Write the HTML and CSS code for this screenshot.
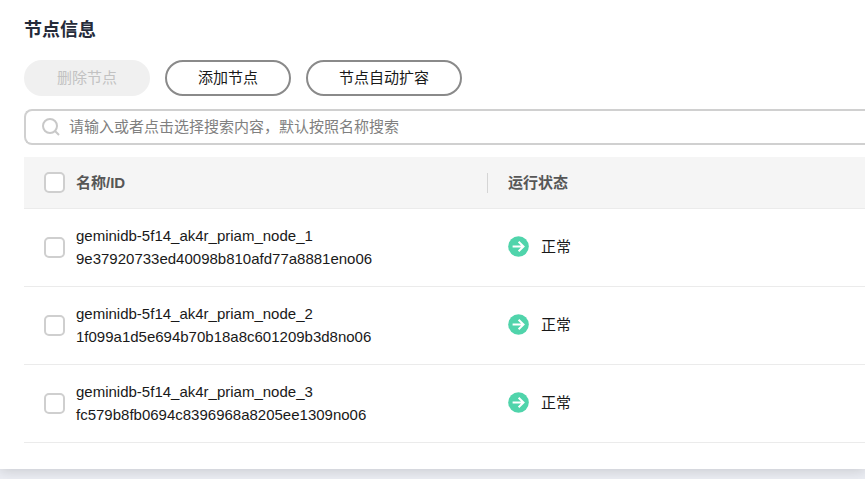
FILE: index.html
```html
<!DOCTYPE html>
<html lang="zh-CN">
<head>
    <meta charset="UTF-8">
    <meta name="viewport" content="width=device-width, initial-scale=1.0">
    <title>节点信息</title>
    <link rel="stylesheet" href="styles.css">
</head>
<body>

    <!-- status icon shared by all rows -->
    <svg class="sprite" aria-hidden="true">
        <symbol id="icon-normal" viewBox="0 0 21 21">
            <circle cx="10.5" cy="10.5" r="10.3" fill="#50d4ab"/>
            <path d="M4.6 10.5h10.8M10.6 5.8l4.9 4.7-4.9 4.7" fill="none" stroke="#fff" stroke-width="2"/>
        </symbol>
    </svg>

    <main class="card">
        <h1>节点信息</h1>

        <div class="toolbar">
            <button type="button" class="btn" disabled>删除节点</button>
            <button type="button" class="btn">添加节点</button>
            <button type="button" class="btn">节点自动扩容</button>
        </div>

        <label class="search">
            <svg class="search-icon" viewBox="0 0 18 18" aria-hidden="true">
                <circle cx="8" cy="8" r="7"/>
                <path d="M13 13l4 4"/>
            </svg>
            <input type="text" aria-label="搜索" placeholder="请输入或者点击选择搜索内容，默认按照名称搜索">
        </label>

        <table>
            <thead>
                <tr>
                    <th class="col-check"><input type="checkbox" aria-label="全选"></th>
                    <th class="col-name"><div>名称/ID</div></th>
                    <th class="col-status">运行状态</th>
                </tr>
            </thead>
            <tbody>
                <tr>
                    <td class="col-check"><input type="checkbox" aria-label="geminidb-5f14_ak4r_priam_node_1"></td>
                    <td class="col-name">geminidb-5f14_ak4r_priam_node_1<br>9e37920733ed40098b810afd77a8881eno06</td>
                    <td class="col-status"><div class="status"><svg><use href="#icon-normal"/></svg>正常</div></td>
                </tr>
                <tr>
                    <td class="col-check"><input type="checkbox" aria-label="geminidb-5f14_ak4r_priam_node_2"></td>
                    <td class="col-name">geminidb-5f14_ak4r_priam_node_2<br>1f099a1d5e694b70b18a8c601209b3d8no06</td>
                    <td class="col-status"><div class="status"><svg><use href="#icon-normal"/></svg>正常</div></td>
                </tr>
                <tr>
                    <td class="col-check"><input type="checkbox" aria-label="geminidb-5f14_ak4r_priam_node_3"></td>
                    <td class="col-name">geminidb-5f14_ak4r_priam_node_3<br>fc579b8fb0694c8396968a8205ee1309no06</td>
                    <td class="col-status"><div class="status"><svg><use href="#icon-normal"/></svg>正常</div></td>
                </tr>
            </tbody>
        </table>
    </main>

</body>
</html>
```
FILE: styles.css
```css
* {
    margin: 0;
    padding: 0;
    box-sizing: border-box;
}

body {
    min-height: 100vh;
    font-family: "Liberation Sans", "Noto Sans CJK SC", sans-serif;
    font-size: 15px;
    line-height: 23px;
    color: #191919;
    background-color: #ebedf3;
}

.sprite {
    display: none;
}

.card {
    padding: 18px 0 26px 24px;
    background-color: #fff;
    box-shadow: 0 2px 12px rgba(0, 0, 0, 0.15);
}

h1 {
    font-size: 18px;
    line-height: 24px;
    color: #252b3a;
    margin-bottom: 18px;
}

.toolbar {
    display: flex;
    gap: 15px;
    margin-bottom: 13px;
}

.btn {
    height: 36px;
    padding: 0 31px 2px;
    font: inherit;
    color: #191919;
    background-color: #fff;
    border: 2px solid #8a8a8a;
    border-radius: 18px;
    cursor: pointer;
}

.btn:disabled {
    color: #c2c2c2;
    background-color: #f0f0f0;
    border-color: #f0f0f0;
    cursor: not-allowed;
}

.search {
    display: flex;
    align-items: center;
    gap: 9px;
    height: 36px;
    padding-left: 16px;
    border: 2px solid #d0d0d0;
    border-right: none;
    border-radius: 8px 0 0 8px;
    margin-bottom: 12px;
}

.search-icon {
    width: 18px;
    height: 18px;
    fill: none;
    stroke: #c8c8c8;
    stroke-width: 2;
}

.search input {
    flex: 1;
    padding-bottom: 2px;
    font: inherit;
    border: none;
    outline: none;
    background: transparent;
}

.search input::placeholder {
    color: #808080;
}

table {
    width: 100%;
    border-collapse: separate;
    border-spacing: 0;
    table-layout: fixed;
}

th,
td {
    text-align: left;
    border-bottom: 1px solid #ebebeb;
}

th {
    height: 52px;
    color: #575757;
    background-color: #f5f5f5;
}

td {
    height: 78px;
    padding-bottom: 2px;
}

.col-check {
    width: 52px;
    padding: 0 0 0 20px;
}

.col-name {
    width: 412px;
}

th.col-name div {
    line-height: 20px;
    border-right: 1px solid #d5d5d5;
}

.col-status {
    padding-left: 20px;
}

input[type="checkbox"] {
    display: block;
    appearance: none;
    width: 21px;
    height: 21px;
    background-color: #fff;
    border: 2px solid #cfcfcf;
    border-radius: 5px;
}

input[type="checkbox"]:checked {
    background-color: #50d4ab;
}

.status {
    display: flex;
    align-items: center;
    gap: 12px;
}

.status svg {
    width: 21px;
    height: 21px;
}
```
